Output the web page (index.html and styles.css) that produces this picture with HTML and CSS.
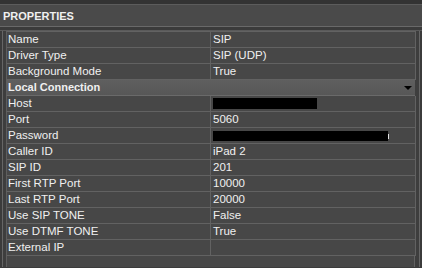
FILE: index.html
```html
<!DOCTYPE html>
<html lang="en">
<head>
    <meta charset="UTF-8">
    <title>properties</title>
    <link rel="stylesheet" href="styles.css">
</head>
<body>
    <div class="topbar"></div>
    <div class="head">PROPERTIES</div>
    <div class="frame">
        <div class="grid">
            <div class="row"><div class="key">Name</div><div class="val">SIP</div></div>
            <div class="row"><div class="key">Driver Type</div><div class="val">SIP (UDP)</div></div>
            <div class="row"><div class="key">Background Mode</div><div class="val">True</div></div>
            <div class="group">Local Connection<span class="arrow"></span></div>
            <div class="row"><div class="key">Host</div><div class="val"><span class="redact host"></span></div></div>
            <div class="row"><div class="key">Port</div><div class="val">5060</div></div>
            <div class="row"><div class="key">Password</div><div class="val"><span class="redact pass"></span><span class="tick"></span></div></div>
            <div class="row"><div class="key">Caller ID</div><div class="val">iPad 2</div></div>
            <div class="row"><div class="key">SIP ID</div><div class="val">201</div></div>
            <div class="row"><div class="key">First RTP Port</div><div class="val">10000</div></div>
            <div class="row"><div class="key">Last RTP Port</div><div class="val">20000</div></div>
            <div class="row"><div class="key">Use SIP TONE</div><div class="val">False</div></div>
            <div class="row"><div class="key">Use DTMF TONE</div><div class="val">True</div></div>
            <div class="row"><div class="key">External IP</div><div class="val"></div></div>
            <div class="rest"></div>
        </div>
    </div>
</body>
</html>
```

FILE: styles.css
```css
*{
    margin: 0px;
    padding: 0px;
    box-sizing: border-box;
}
body{
    width: 422px;
    height: 268px;
    overflow: hidden;
    background-color: #3b3b3b;
    font-family: "Liberation Sans", Arial, sans-serif;
    font-size: 11.5px;
    color: #f0f0f0;
}
.topbar{
    height: 5px;
    background-color: #333333;
    border-bottom: 1px solid #5c5c5c;
}
.head{
    height: 22px;
    line-height: 22px;
    padding-left: 3px;
    font-size: 11px;
    font-weight: bold;
    background-color: #4a4a4a;
    border-bottom: 1px solid #696969;
}
.frame{
    margin-top: 3px;
    padding-left: 2px;
    padding-right: 2px;
    border-top: 1px solid #5a5a5a;
    height: 237px;
    display: flex;
}
.grid{
    flex: 1;
    display: flex;
    flex-direction: column;
    border-left: 1px solid #666666;
    border-right: 1px solid #666666;
    padding-left: 3px;
    padding-right: 3px;
    background-color: #3e3e3e;
}
.row{
    display: grid;
    grid-template-columns: 204px 205px;
    height: 16px;
    flex-shrink: 0;
    background-color: #474747;
    border-bottom: 1px solid #626262;
    border-left: 1px solid #5e5e5e;
}
.row:first-child{
    height: 17px;
    border-top: 1px solid #626262;
}
.key{
    padding-left: 1px;
    line-height: 15px;
    border-right: 1px solid #626262;
}
.val{
    padding-left: 2px;
    line-height: 15px;
    border-right: 1px solid #626262;
    display: flex;
    align-items: center;
}
.group{
    position: relative;
    height: 16px;
    flex-shrink: 0;
    line-height: 15px;
    padding-left: 1px;
    font-size: 11px;
    font-weight: bold;
    background: linear-gradient(#5f5f5f, #575757);
    border-bottom: 1px solid #6a6a6a;
    border-left: 1px solid #5e5e5e;
    width: 409px;
}
.arrow{
    position: absolute;
    left: 397px;
    top: 6px;
    width: 0px;
    height: 0px;
    border-left: 4px solid transparent;
    border-right: 4px solid transparent;
    border-top: 4px solid #000000;
}
.redact{
    display: block;
    background-color: #000000;
}
.host{
    width: 104px;
    height: 11px;
}
.pass{
    width: 175px;
    height: 10px;
}
.tick{
    display: block;
    width: 1px;
    height: 5px;
    margin-top: 2px;
    background-color: #e0e0e0;
}
.rest{
    flex: 1;
    width: 409px;
    background-color: #474747;
    border-left: 1px solid #5e5e5e;
    border-right: 1px solid #626262;
}
```
